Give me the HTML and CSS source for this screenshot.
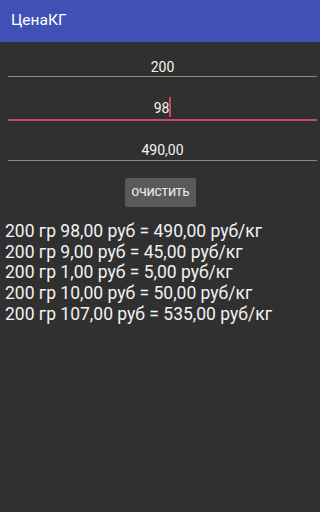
FILE: index.html
```html
<!DOCTYPE html>
<html lang="ru">
<head>
<meta charset="utf-8">
<title>ЦенаКГ</title>
<link rel="stylesheet" href="styles.css">
</head>
<body>
<header class="appbar"><span class="title">ЦенаКГ</span></header>
<main class="content">
  <div class="field field-1"><span class="value">200</span></div>
  <div class="field field-2 focused"><span class="value shifted">98<span class="cursor"></span></span></div>
  <div class="field field-3"><span class="value">490,00</span></div>
  <div class="actions"><button class="btn" type="button">ОЧИСТИТЬ</button></div>
  <ul class="results">
    <li>200 гр 98,00 руб = 490,00 руб/кг</li>
    <li>200 гр 9,00 руб = 45,00 руб/кг</li>
    <li>200 гр 1,00 руб = 5,00 руб/кг</li>
    <li>200 гр 10,00 руб = 50,00 руб/кг</li>
    <li>200 гр 107,00 руб = 535,00 руб/кг</li>
  </ul>
</main>
</body>
</html>
```
FILE: styles.css
```css
html, body {
  margin: 0;
  padding: 0;
  background: #303030;
  height: 100%;
}
body {
  font-family: Roboto, "Noto Sans", "DejaVu Sans", sans-serif;
  color: #f2f2f2;
}
.appbar {
  height: 42px;
  background: #3f51b5;
  display: flex;
  align-items: center;
  padding-left: 11px;
  box-sizing: border-box;
}
.title {
  font-size: 15.5px;
  color: #ffffff;
  line-height: 18px;
  margin-top: -3px;
}
.content {
  display: flex;
  flex-direction: column;
}
.field {
  margin-left: 8px;
  margin-right: 3px;
  text-align: center;
  font-size: 14px;
  line-height: 16px;
  border-bottom: 1px solid #8a8a8a;
}
.field-1 {
  margin-top: 17px;
  padding-bottom: 1px;
}
.field-2 {
  margin-top: 23px;
  padding-bottom: 3px;
}
.field-3 {
  margin-top: 21px;
  padding-bottom: 2px;
}
.focused {
  border-bottom: 2px solid #c8456f;
}
.value {
  position: relative;
  color: #f4f4f4;
}
.shifted {
  margin-right: 2px;
}
.cursor {
  position: absolute;
  right: -2px;
  top: -3px;
  width: 2px;
  height: 20px;
  background: #c8456f;
}
.actions {
  display: flex;
  justify-content: center;
  margin-top: 17px;
  padding-left: 1px;
}
.btn {
  width: 71px;
  height: 29px;
  border: none;
  border-radius: 2px;
  background: #5a5a5a;
  color: #e6e6e6;
  font-family: Roboto, "Noto Sans", sans-serif;
  font-size: 11px;
  font-weight: 500;
  padding: 0;
}
.results {
  list-style: none;
  margin: 14px 0 0 0;
  padding: 0 0 0 5px;
  font-size: 17.5px;
  line-height: 20.7px;
  color: #f2f2f2;
}
```
